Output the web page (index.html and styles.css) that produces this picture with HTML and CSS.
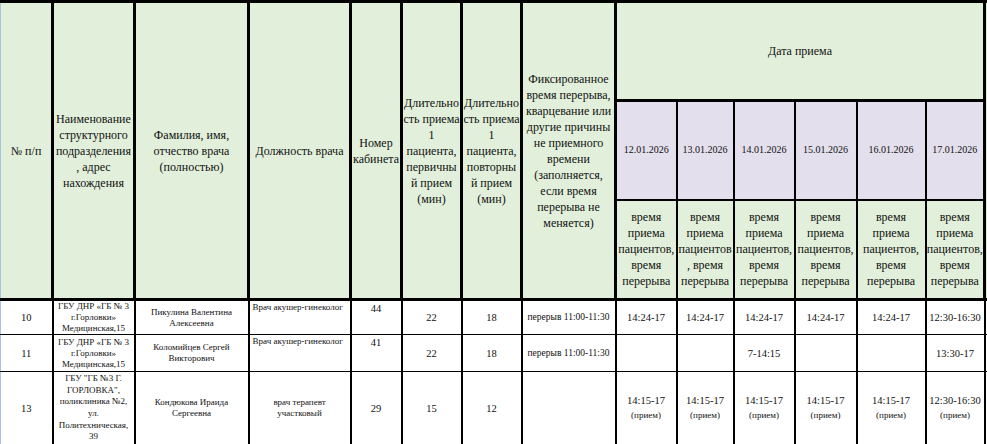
FILE: index.html
```html
<!DOCTYPE html>
<html lang="ru">
<head>
<meta charset="utf-8">
<title>График приема</title>
<link rel="stylesheet" href="styles.css">
</head>
<body>
<table class="sched">
  <colgroup>
    <col class="c-num">
    <col class="c-org">
    <col class="c-name">
    <col class="c-pos">
    <col class="c-room">
    <col class="c-dur">
    <col class="c-dur">
    <col class="c-brk">
    <col class="c-d1">
    <col class="c-d2">
    <col class="c-d3">
    <col class="c-d4">
    <col class="c-d5">
    <col class="c-d6">
    <col class="c-extra">
  </colgroup>
  <thead>
    <tr class="h1">
      <th rowspan="3" class="first">№ п/п</th>
      <th rowspan="3">Наименование<br>структурного<br>подразделения<br>, адрес<br>нахождения</th>
      <th rowspan="3">Фамилия, имя,<br>отчество врача<br>(полностью)</th>
      <th rowspan="3">Должность врача</th>
      <th rowspan="3">Номер<br>кабинета</th>
      <th rowspan="3">Длительно<br>сть приема<br>1<br>пациента,<br>первичны<br>й прием<br>(мин)</th>
      <th rowspan="3">Длительно<br>сть приема<br>1<br>пациента,<br>повторны<br>й прием<br>(мин)</th>
      <th rowspan="3">Фиксированное<br>время перерыва,<br>кварцевание или<br>другие причины<br>не приемного<br>времени<br>(заполняется,<br>если время<br>перерыва не<br>меняется)</th>
      <th colspan="6">Дата приема</th>
      <th rowspan="3" class="extra"></th>
    </tr>
    <tr class="h2">
      <th class="date">12.01.2026</th>
      <th class="date">13.01.2026</th>
      <th class="date">14.01.2026</th>
      <th class="date">15.01.2026</th>
      <th class="date">16.01.2026</th>
      <th class="date">17.01.2026</th>
    </tr>
    <tr class="h3">
      <th>время<br>приема<br>пациентов,<br>время<br>перерыва</th>
      <th>время<br>приема<br>пациентов<br>, время<br>перерыва</th>
      <th>время<br>приема<br>пациентов,<br>время<br>перерыва</th>
      <th>время<br>приема<br>пациентов,<br>время<br>перерыва</th>
      <th>время<br>приема<br>пациентов,<br>время<br>перерыва</th>
      <th>время<br>приема<br>пациентов,<br>время<br>перерыва</th>
    </tr>
  </thead>
  <tbody>
    <tr class="r1">
      <td class="first n">10</td>
      <td class="s">ГБУ ДНР «ГБ № 3<br>г.Горловки»<br>Медицинская,15</td>
      <td class="s">Пикулина Валентина<br>Алексеевна</td>
      <td class="s top left">Врач акушер-гинеколог</td>
      <td class="n top">44</td>
      <td class="n">22</td>
      <td class="n">18</td>
      <td class="s brk">перерыв 11:00-11:30</td>
      <td class="n">14:24-17</td>
      <td class="n">14:24-17</td>
      <td class="n">14:24-17</td>
      <td class="n">14:24-17</td>
      <td class="n">14:24-17</td>
      <td class="n">12:30-16:30</td>
      <td class="extra"></td>
    </tr>
    <tr class="r2">
      <td class="first n">11</td>
      <td class="s">ГБУ ДНР «ГБ № 3<br>г.Горловки»<br>Медицинская,15</td>
      <td class="s">Коломийцев Сергей<br>Викторович</td>
      <td class="s top left">Врач акушер-гинеколог</td>
      <td class="n top">41</td>
      <td class="n">22</td>
      <td class="n">18</td>
      <td class="s brk">перерыв 11:00-11:30</td>
      <td class="n"></td>
      <td class="n"></td>
      <td class="n">7-14:15</td>
      <td class="n"></td>
      <td class="n"></td>
      <td class="n">13:30-17</td>
      <td class="extra"></td>
    </tr>
    <tr class="r3">
      <td class="first n">13</td>
      <td class="s tall">ГБУ "ГБ №3 Г.<br>ГОРЛОВКА",<br>поликлиника №2,<br>ул.<br>Политехническая,<br>39</td>
      <td class="s">Кондюкова Ираида<br>Сергеевна</td>
      <td class="s">врач терапевт<br>участковый</td>
      <td class="n">29</td>
      <td class="n">15</td>
      <td class="n">12</td>
      <td class="s"></td>
      <td class="n t2">14:15-17<br><span class="sub">(прием)</span></td>
      <td class="n t2">14:15-17<br><span class="sub">(прием)</span></td>
      <td class="n t2">14:15-17<br><span class="sub">(прием)</span></td>
      <td class="n t2">14:15-17<br><span class="sub">(прием)</span></td>
      <td class="n t2">14:15-17<br><span class="sub">(прием)</span></td>
      <td class="n t2">12:30-16:30<br><span class="sub">(прием)</span></td>
      <td class="extra"></td>
    </tr>
  </tbody>
</table>
</body>
</html>
```

FILE: styles.css
```css
html, body {
  margin: 0;
  padding: 0;
  overflow: hidden;
  background: #ffffff;
}

body,
.sched,
.sched th,
.sched td {
  font-family: "Liberation Serif", "Tinos", "DejaVu Serif", "Times New Roman", serif;
  color: #111111;
}

.sched {
  border-collapse: collapse;
  table-layout: fixed;
  width: 1014px;
}

.c-num { width: 52px; }
.c-org { width: 82px; }
.c-name { width: 114px; }
.c-pos { width: 102px; }
.c-room { width: 51px; }
.c-dur { width: 60px; }
.c-brk { width: 94px; }
.c-d1 { width: 61px; }
.c-d2 { width: 57px; }
.c-d3 { width: 61px; }
.c-d4 { width: 62px; }
.c-d5 { width: 69px; }
.c-d6 { width: 59px; }
.c-extra { width: 30px; }

.sched th {
  background: #e2efda;
  border: 3px solid #000;
  font-weight: normal;
  font-size: 12px;
  line-height: 16px;
  padding: 0;
  text-align: center;
  vertical-align: middle;
  white-space: nowrap;
  overflow: visible;
}

.sched th.date {
  background: #e4dfec;
  font-size: 10px;
  border-width: 2px;
}

.sched .h3 th {
  border-width: 2px;
}

.sched th.first,
.sched td.first {
  border-left: 1px solid #a9c4de;
}

.sched th.extra {
  border-right: none;
}

.h1 { height: 99px; }
.h2 { height: 99px; }
.h3 { height: 100px; }

.sched td {
  background: #ffffff;
  border-top: 1px solid #000;
  border-bottom: 1px solid #000;
  border-left: 2px solid #000;
  border-right: 2px solid #000;
  padding: 0;
  text-align: center;
  vertical-align: middle;
  white-space: nowrap;
}

.sched td.extra {
  border-right: none;
}

.sched tbody tr:first-child td {
  border-top: 3px solid #000;
}

.r1 { height: 35px; }
.r2 { height: 37px; }
.r3 { height: 73px; }

.sched td.s {
  font-size: 9px;
  line-height: 11px;
}

.sched td.tall {
  line-height: 11.7px;
}

.sched td.brk {
  font-size: 9.5px;
}

.sched td.n {
  font-size: 10.5px;
  line-height: 13px;
}

.sched td.top {
  vertical-align: top;
  padding-top: 1px;
}

.sched td.left {
  text-align: left;
  padding-left: 3px;
}

.sched td.t2 {
  line-height: 14px;
}

.sub {
  font-size: 9px;
}
```
